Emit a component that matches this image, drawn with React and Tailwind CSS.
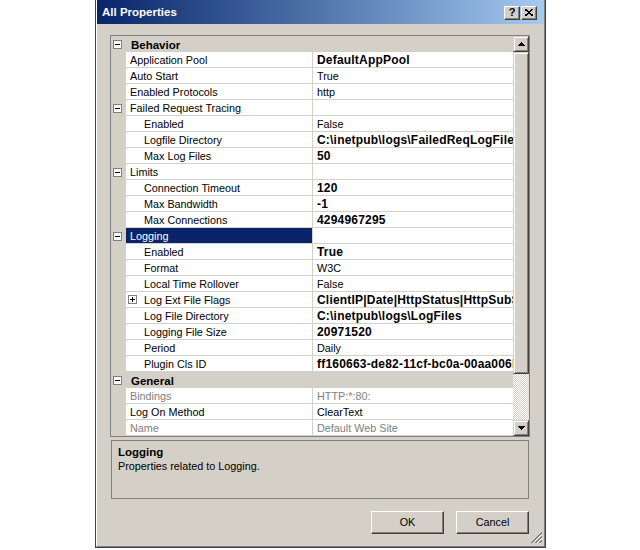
import React from 'react';

const rows = [
  { cat: true, name: 'Behavior' },
  { name: 'Application Pool', value: 'DefaultAppPool', bold: true },
  { name: 'Auto Start', value: 'True' },
  { name: 'Enabled Protocols', value: 'http' },
  { name: 'Failed Request Tracing', group: true },
  { name: 'Enabled', value: 'False', sub: true },
  { name: 'Logfile Directory', value: 'C:\\inetpub\\logs\\FailedReqLogFiles', bold: true, sub: true },
  { name: 'Max Log Files', value: '50', bold: true, sub: true },
  { name: 'Limits', group: true },
  { name: 'Connection Timeout', value: '120', bold: true, sub: true },
  { name: 'Max Bandwidth', value: '-1', bold: true, sub: true },
  { name: 'Max Connections', value: '4294967295', bold: true, sub: true },
  { name: 'Logging', group: true, selected: true },
  { name: 'Enabled', value: 'True', bold: true, sub: true },
  { name: 'Format', value: 'W3C', sub: true },
  { name: 'Local Time Rollover', value: 'False', sub: true },
  { name: 'Log Ext File Flags', value: 'ClientIP|Date|HttpStatus|HttpSubStatus', bold: true, sub: true, plus: true },
  { name: 'Log File Directory', value: 'C:\\inetpub\\logs\\LogFiles', bold: true, sub: true },
  { name: 'Logging File Size', value: '20971520', bold: true, sub: true },
  { name: 'Period', value: 'Daily', sub: true },
  { name: 'Plugin Cls ID', value: 'ff160663-de82-11cf-bc0a-00aa006b2e24', bold: true, sub: true },
  { cat: true, name: 'General' },
  { name: 'Bindings', value: 'HTTP:*:80:', disabled: true },
  { name: 'Log On Method', value: 'ClearText' },
  { name: 'Name', value: 'Default Web Site', disabled: true },
];

// classic 3D raised edge
const bevel =
  'border border-t-[#d4d0c8] border-l-[#d4d0c8] border-r-[#404040] border-b-[#404040] shadow-[inset_1px_1px_#ffffff,inset_-1px_-1px_#808080] bg-[#d4d0c8]';
const btnBevel =
  'border border-t-white border-l-white border-r-[#404040] border-b-[#404040] shadow-[inset_-1px_-1px_#808080] bg-[#d4d0c8]';

const Expander = ({ plus }) => (
  <svg width="9" height="9" shapeRendering="crispEdges">
    <rect x="0.5" y="0.5" width="8" height="8" fill="white" stroke="#808080" />
    <path d="M2 4.5h5" stroke="black" />
    {plus && <path d="M4.5 2v5" stroke="black" />}
  </svg>
);

const Arrow = ({ down }) => (
  <svg width="7" height="4" shapeRendering="crispEdges">
    <polygon points={down ? '0,0 7,0 3.5,4' : '0,4 7,4 3.5,0'} fill="black" />
  </svg>
);

const Row = ({ row }) => {
  if (row.cat) {
    return (
      <div className="flex h-[16px] bg-[#d4d0c8]">
        <div className="w-[15px] flex items-center pl-[2px]">
          <Expander />
        </div>
        <div className="flex-1 pl-[5px] pt-[1px] text-[11.5px] font-bold leading-[16px] text-black">{row.name}</div>
      </div>
    );
  }
  const nameColor = row.selected ? 'bg-[#0a246a] text-white' : row.disabled ? 'bg-white text-[#808080]' : 'bg-white text-black';
  return (
    <div className="flex h-[16px]">
      <div className="w-[15px] flex items-center pl-[2px] bg-[#d4d0c8]">{row.group && <Expander />}</div>
      <div className={`w-[187px] flex items-center border-b border-r border-[#d4d0c8] ${nameColor}`}>
        {row.plus ? (
          <>
            <span className="ml-[2px] flex items-center">
              <Expander plus />
            </span>
            <span className="ml-[7px] pt-[2px] text-[10.8px] leading-[15px] whitespace-nowrap">{row.name}</span>
          </>
        ) : (
          <span className={`${row.sub ? 'pl-[18px]' : 'pl-[4px]'} pt-[2px] text-[10.8px] leading-[15px] whitespace-nowrap`}>
            {row.name}
          </span>
        )}
      </div>
      <div className="w-[200px] bg-white border-b border-[#d4d0c8] overflow-hidden flex items-center">
        <span
          className={`pl-[4px] pt-[2px] whitespace-nowrap leading-[15px] ${
            row.bold ? 'font-bold text-[12px] tracking-[0.2px]' : 'text-[10.8px]'
          } ${row.disabled ? 'text-[#808080]' : 'text-black'}`}
        >
          {row.value}
        </span>
      </div>
    </div>
  );
};

export default function App() {
  return (
    <div className="w-[640px] h-[550px] bg-white font-['Liberation_Sans',Arial,sans-serif]">
      <div className="ml-[95px] w-[451px] h-[548px] border-x border-b border-[#404040]">
        <div className="relative h-full flex flex-col bg-[#d4d0c8] border-l border-l-white border-r border-r-[#808080] border-b border-b-[#808080]">
          {/* title bar */}
          <div className="h-[24px] flex items-center justify-between pl-[5px] pr-[7px] bg-linear-to-r from-[#0a246a] to-[#a6caf0]">
            <span className="pt-[2px] text-white font-bold text-[11.5px]">All Properties</span>
            <div className="flex gap-[1px] pt-[1px]">
              <div className={`w-[16px] h-[14px] flex items-center justify-center ${btnBevel}`}>
                <span className="text-[11px] font-bold leading-none text-black">?</span>
              </div>
              <div className={`w-[16px] h-[14px] flex items-center justify-center ${btnBevel}`}>
                <svg width="8" height="7" shapeRendering="crispEdges">
                  <path d="M0 0L8 7M8 0L0 7" stroke="black" strokeWidth="1.6" />
                </svg>
              </div>
            </div>
          </div>

          {/* property grid */}
          <div className="pl-[13px] pt-[11px]">
            <div className="w-[420px] h-[402px] border border-[#808080] flex">
              <div className="w-[402px] flex flex-col">
                {rows.map((r, i) => (
                  <Row key={i} row={r} />
                ))}
              </div>
              <div className="w-[16px] flex flex-col">
                <div className={`h-[16px] flex items-center justify-center ${bevel}`}>
                  <Arrow />
                </div>
                <div className={`h-[322px] ${bevel}`} />
                <div className="flex-1 bg-[image:conic-gradient(#ffffff_25%,#d4d0c8_0_50%,#ffffff_0_75%,#d4d0c8_0)] bg-[length:2px_2px]" />
                <div className={`h-[16px] flex items-center justify-center ${bevel}`}>
                  <Arrow down />
                </div>
              </div>
            </div>
          </div>

          {/* description */}
          <div className="ml-[14px] mt-[3px] w-[418px] h-[59px] border border-[#808080] px-[6px] pt-[4px]">
            <div className="text-[11.5px] font-bold leading-[14px] text-black">Logging</div>
            <div className="text-[10.8px] leading-[15px] text-black">Properties related to Logging.</div>
          </div>

          {/* buttons */}
          <div className="mt-[12px] flex justify-end gap-[12px] pr-[15px]">
            <button className={`w-[73px] h-[23px] text-[10.8px] text-black ${btnBevel}`}>OK</button>
            <button className={`w-[73px] h-[23px] text-[10.8px] text-black ${btnBevel}`}>Cancel</button>
          </div>

          {/* size grip */}
          <svg className="absolute right-[1px] bottom-[2px]" width="12" height="12" shapeRendering="crispEdges">
            <path d="M11 0L0 11M11 4L4 11M11 8L8 11" stroke="#808080" />
            <path d="M11 1L1 11M11 5L5 11M11 9L9 11" stroke="#808080" />
            <path d="M11 2L2 11M11 6L6 11M11 10L10 11" stroke="white" />
          </svg>
        </div>
      </div>
    </div>
  );
}
